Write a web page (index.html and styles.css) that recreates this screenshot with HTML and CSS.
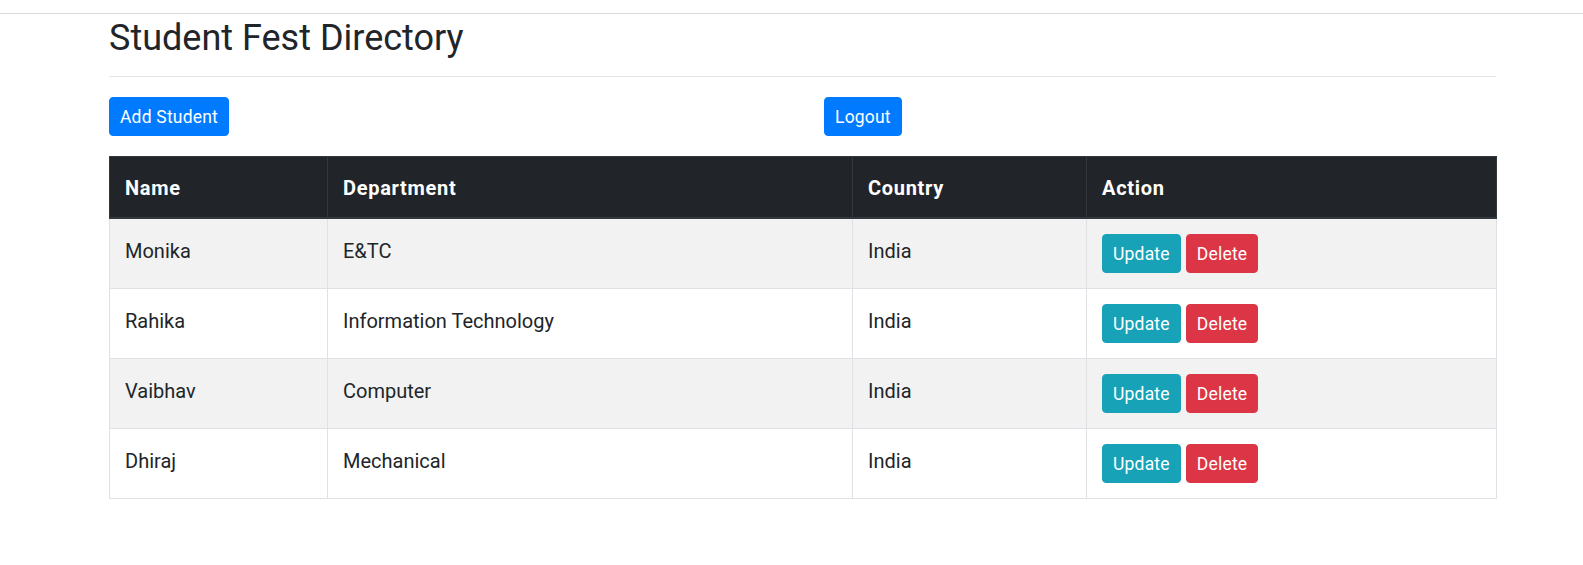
FILE: index.html
```html
<!DOCTYPE html>
<html lang="en">
<head>
<meta charset="utf-8">
<title>Student Fest Directory</title>
<link rel="stylesheet" href="styles.css">
</head>
<body>
<div class="topbar"></div>
<div class="container">
  <h3 class="title">Student Fest Directory</h3>
  <hr class="divider">
  <div class="actions">
    <div><button class="btn btn-primary">Add Student</button></div>
    <div><button class="btn btn-primary">Logout</button></div>
  </div>
  <table class="table">
    <colgroup>
      <col class="c-name">
      <col class="c-dept">
      <col class="c-country">
      <col class="c-action">
    </colgroup>
    <thead>
      <tr><th>Name</th><th>Department</th><th>Country</th><th>Action</th></tr>
    </thead>
    <tbody>
      <tr class="odd">
        <td>Monika</td><td>E&amp;TC</td><td>India</td>
        <td class="act"><div class="btns"><button class="btn btn-info">Update</button><button class="btn btn-danger">Delete</button></div></td>
      </tr>
      <tr>
        <td>Rahika</td><td>Information Technology</td><td>India</td>
        <td class="act"><div class="btns"><button class="btn btn-info">Update</button><button class="btn btn-danger">Delete</button></div></td>
      </tr>
      <tr class="odd">
        <td>Vaibhav</td><td>Computer</td><td>India</td>
        <td class="act"><div class="btns"><button class="btn btn-info">Update</button><button class="btn btn-danger">Delete</button></div></td>
      </tr>
      <tr>
        <td>Dhiraj</td><td>Mechanical</td><td>India</td>
        <td class="act"><div class="btns"><button class="btn btn-info">Update</button><button class="btn btn-danger">Delete</button></div></td>
      </tr>
    </tbody>
  </table>
</div>
</body>
</html>
```
FILE: styles.css
```css
* { box-sizing: border-box; }
html, body { margin: 0; padding: 0; background: #fff; }
body {
  font-family: Roboto, "Liberation Sans", sans-serif;
  font-size: 20px;
  line-height: 30px;
  color: #212529;
}
.topbar {
  height: 14px;
  border-bottom: 1px solid #dadada;
}
.container {
  width: 1387px;
  margin: 0 0 0 109px;
}
.title {
  margin: 3px 0 17px;
  font-size: 36px;
  line-height: 42px;
  font-weight: 400;
  color: #212529;
}
.divider {
  margin: 0;
  border: 0;
  border-top: 1px solid #e5e5e5;
  height: 0;
}
.actions {
  display: grid;
  grid-template-columns: 1fr 1fr;
  column-gap: 43px;
  margin: 20px 0;
}
.btn {
  font-family: inherit;
  font-size: 17.5px;
  line-height: 27px;
  padding: 6px 10px 4px;
  border: 1px solid transparent;
  border-radius: 4px;
  color: #fff;
  letter-spacing: 0.2px;
  cursor: pointer;
  display: inline-block;
}
.btn-primary { background: #007bff; border-color: #007bff; }
.btn-info { background: #17a2b8; border-color: #17a2b8; }
.btn-danger { background: #dc3545; border-color: #dc3545; }
.table {
  width: 1387px;
  border-collapse: collapse;
  table-layout: fixed;
  border: 1px solid #dee2e6;
}
.c-name { width: 218px; }
.c-dept { width: 525px; }
.c-country { width: 234px; }
.c-action { width: 410px; }
.table th {
  background: #212529;
  color: #fff;
  font-weight: 700;
  text-align: left;
  padding: 16px 15px 14px;
  line-height: 30px;
  letter-spacing: 0.7px;
  border: 1px solid #32383e;
  border-bottom: 2px solid #32383e;
  vertical-align: bottom;
}
.table td {
  padding: 17px 15px 13px;
  border: 1px solid #dee2e6;
  vertical-align: top;
  line-height: 30px;
}
.table td.act {
  padding: 15px 15px;
}
.table tr.odd td { background: #f2f2f2; }
.btns {
  display: flex;
  gap: 5px;
}
```
